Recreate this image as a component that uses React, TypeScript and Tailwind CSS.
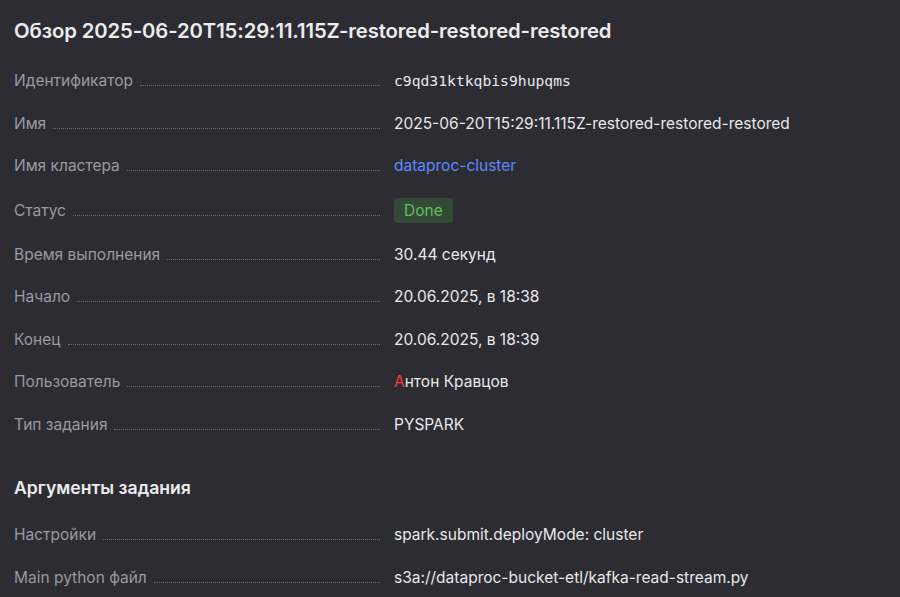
import type { ReactNode } from 'react';

const sans = { fontFamily: 'Inter, "Noto Sans", sans-serif' };

function Row({ label, children, tall }: { label: string; children: ReactNode; tall?: boolean }) {
  return (
    <div className={`flex items-center ${tall ? 'h-[46px]' : 'h-[42.5px]'}`}>
      <div className="flex w-[373px] shrink-0 items-baseline text-[15.5px] leading-5 text-[#9a9aa0]">
        <span>{label}</span>
        <span className="mx-[7px] flex-1 border-b border-dotted border-[#6a6a70]" />
      </div>
      <div className="pl-[7px] text-[15.5px] leading-5 text-[#e8e8ea]">{children}</div>
    </div>
  );
}

export default function App() {
  return (
    <div className="min-h-screen bg-[#2d2c33] px-[14px] pt-[17px]" style={sans}>
      <h1 className="text-[20.3px] font-semibold leading-7 tracking-[-0.1px] text-[#ececee]">
        Обзор 2025-06-20T15:29:11.115Z-restored-restored-restored
      </h1>
      <div className="mt-[15px]">
        <Row label="Идентификатор">
          <span className="text-[14.7px]" style={{ fontFamily: '"DejaVu Sans Mono", monospace' }}>
            c9qd31ktkqbis9hupqms
          </span>
        </Row>
        <Row label="Имя">2025-06-20T15:29:11.115Z-restored-restored-restored</Row>
        <Row label="Имя кластера">
          <span className="text-[#5b8aff]">dataproc-cluster</span>
        </Row>
        <Row label="Статус" tall>
          <span className="inline-flex h-[25px] items-center rounded-[4px] bg-[#344a36] px-[10px] text-[#5fbf5f]">
            Done
          </span>
        </Row>
        <Row label="Время выполнения">30.44 секунд</Row>
        <Row label="Начало">20.06.2025, в 18:38</Row>
        <Row label="Конец">20.06.2025, в 18:39</Row>
        <Row label="Пользователь">
          <span className="text-[#ff3b30]">А</span>нтон Кравцов
        </Row>
        <Row label="Тип задания">PYSPARK</Row>
      </div>
      <h2 className="mt-[30px] text-[17.6px] font-semibold leading-6 text-[#ececee]">Аргументы задания</h2>
      <div className="mt-[14px]">
        <Row label="Настройки">spark.submit.deployMode: cluster</Row>
        <Row label="Main python файл">s3a://dataproc-bucket-etl/kafka-read-stream.py</Row>
      </div>
    </div>
  );
}
